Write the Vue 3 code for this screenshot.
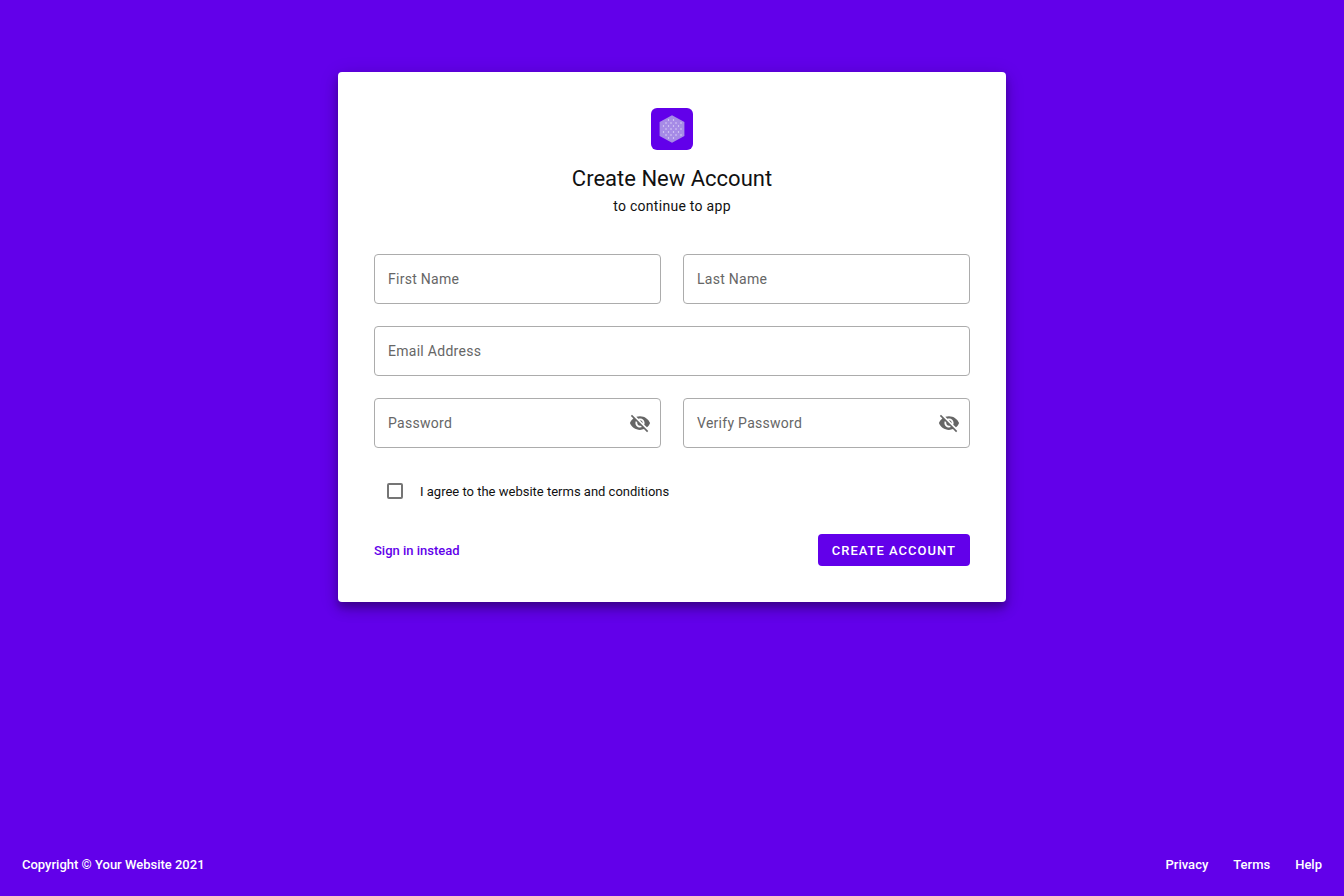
<script setup>
import { reactive } from 'vue'

const fields = reactive([
  { id: 'first-name', label: 'First Name', type: 'text', value: '' },
  { id: 'last-name', label: 'Last Name', type: 'text', value: '' },
  { id: 'email', label: 'Email Address', type: 'email', value: '', wide: true },
  { id: 'password', label: 'Password', type: 'password', value: '', secret: true, visible: false },
  { id: 'verify-password', label: 'Verify Password', type: 'password', value: '', secret: true, visible: false },
])

const dots = []
for (let row = 0; row < 9; row++) {
  for (let col = 0; col < 5; col++) {
    const x = 10 + col * 5 + (row % 2) * 2.5
    const y = 9 + row * 3
    if (Math.abs(x - 21) < 11 && Math.abs(x - 21) * 0.55 + Math.abs(y - 21) < 12.5) dots.push({ x, y })
  }
}
</script>

<template>
  <div class="page">
    <main class="main">
      <section class="card">
        <header class="head">
          <svg class="logo" viewBox="0 0 42 42" aria-hidden="true">
            <rect width="42" height="42" rx="6" fill="#6200ea" />
            <path d="M21 7.2 33.4 14v14L21 34.8 8.6 28V14z" fill="#a68be6" />
            <circle v-for="(d, i) in dots" :key="i" :cx="d.x" :cy="d.y" r="0.7" fill="#e6defa" />
          </svg>
          <h1 class="title">Create New Account</h1>
          <p class="subtitle">to continue to app</p>
        </header>

        <form @submit.prevent>
          <div class="fields">
            <div v-for="f in fields" :key="f.id" class="field" :class="{ wide: f.wide, filled: f.value }">
              <input :id="f.id" v-model="f.value" class="input" :type="f.visible ? 'text' : f.type" />
              <label class="label" :for="f.id">{{ f.label }}</label>
              <button
                v-if="f.secret"
                class="toggle"
                type="button"
                aria-label="Toggle password visibility"
                @click="f.visible = !f.visible"
              >
                <svg viewBox="0 0 24 24" width="22" height="22" aria-hidden="true">
                  <path
                    fill="#666"
                    d="M12 7c2.76 0 5 2.24 5 5 0 .65-.13 1.26-.36 1.83l2.92 2.92c1.51-1.26 2.7-2.89 3.43-4.75-1.73-4.39-6-7.5-11-7.5-1.4 0-2.74.25-3.98.7l2.16 2.16C10.74 7.13 11.35 7 12 7zM2 4.27l2.28 2.28.46.46C3.08 8.3 1.78 10.02 1 12c1.73 4.39 6 7.5 11 7.5 1.55 0 3.03-.3 4.38-.84l.42.42L19.73 22 21 20.73 3.27 3 2 4.27zM7.53 9.8l1.55 1.55c-.05.21-.08.43-.08.65 0 1.66 1.34 3 3 3 .22 0 .44-.03.65-.08l1.55 1.55c-.67.33-1.41.53-2.2.53-2.76 0-5-2.24-5-5 0-.79.2-1.53.53-2.2zm4.31-.78l3.15 3.15.02-.16c0-1.66-1.34-3-3-3l-.17.01z"
                  />
                </svg>
              </button>
            </div>
          </div>

          <div class="agree">
            <input id="agree" class="check" type="checkbox" />
            <label for="agree">I agree to the website terms and conditions</label>
          </div>

          <div class="actions">
            <a class="signin" href="#">Sign in instead</a>
            <button class="submit" type="submit">CREATE ACCOUNT</button>
          </div>
        </form>
      </section>
    </main>

    <footer class="footer">
      <span>Copyright © Your Website 2021</span>
      <nav class="links">
        <a href="#">Privacy</a>
        <a href="#">Terms</a>
        <a href="#">Help</a>
      </nav>
    </footer>
  </div>
</template>

<style>
body {
  margin: 0;
  background: #6200ea;
}
</style>

<style scoped>
.page {
  box-sizing: border-box;
  min-height: 100vh;
  display: flex;
  flex-direction: column;
  background: #6200ea;
  color: #111;
  font-family: Roboto, "Liberation Sans", sans-serif;
}
.main {
  flex: 1;
  display: flex;
  justify-content: center;
  align-items: flex-start;
  padding: 72px 22px 36px;
}
.card {
  box-sizing: border-box;
  width: 100%;
  max-width: 668px;
  padding: 36px;
  background: #fff;
  border-radius: 4px;
  box-shadow: 0 5px 6px rgba(0, 0, 0, 0.2), 0 8px 14px rgba(0, 0, 0, 0.16), 0 3px 20px rgba(0, 0, 0, 0.14);
}
.head {
  display: flex;
  flex-direction: column;
  align-items: center;
  text-align: center;
  margin-bottom: 36px;
}
.logo {
  width: 42px;
  height: 42px;
}
.title {
  margin: 14px 0 0;
  font-size: 22px;
  line-height: 30px;
  font-weight: 400;
}
.subtitle {
  margin: 0;
  font-size: 14px;
  line-height: 24px;
  letter-spacing: 0.02em;
}
.fields {
  display: grid;
  grid-template-columns: 1fr 1fr;
  gap: 22px;
}
.field {
  position: relative;
  display: flex;
}
.wide {
  grid-column: 1 / -1;
}
.input {
  box-sizing: border-box;
  width: 100%;
  min-width: 0;
  height: 50px;
  padding: 0 14px;
  border: 1px solid #acacac;
  border-radius: 4px;
  background: #fff;
  color: inherit;
  font: inherit;
  font-size: 14px;
  outline: none;
}
.input:focus {
  border-color: #6200ea;
}
.label {
  position: absolute;
  left: 14px;
  top: 15px;
  font-size: 14px;
  line-height: 20px;
  letter-spacing: 0.02em;
  color: #666;
  pointer-events: none;
}
.input:focus + .label,
.filled .label {
  left: 10px;
  top: -10px;
  padding: 0 4px;
  background: #fff;
  font-size: 12px;
}
.toggle {
  position: absolute;
  right: 10px;
  top: 14px;
  display: flex;
  padding: 0;
  border: 0;
  background: none;
  cursor: pointer;
}
.agree {
  display: flex;
  align-items: center;
  gap: 17px;
  height: 36px;
  margin-top: 25px;
  padding-left: 13px;
  font-size: 13px;
}
.check {
  appearance: none;
  width: 16px;
  height: 16px;
  margin: 0;
  border: 2px solid #757575;
  border-radius: 2px;
}
.check:checked {
  border-color: #6200ea;
  background: #6200ea;
}
.actions {
  display: flex;
  align-items: center;
  justify-content: space-between;
  margin-top: 25px;
}
.signin {
  color: #6200ea;
  font-size: 13px;
  font-weight: 500;
  text-decoration: none;
}
.submit {
  height: 32px;
  padding: 0 14px;
  border: 0;
  border-radius: 4px;
  background: #6200ea;
  color: #fff;
  font: inherit;
  font-size: 13px;
  font-weight: 500;
  letter-spacing: 1px;
  cursor: pointer;
}
.footer {
  display: flex;
  flex-wrap: wrap;
  align-items: center;
  justify-content: space-between;
  gap: 14px;
  padding: 0 22px 21px;
  color: #fff;
  font-size: 13px;
  line-height: 20px;
  font-weight: 500;
}
.links {
  display: flex;
  gap: 25px;
}
.links a {
  color: inherit;
  text-decoration: none;
}
</style>
